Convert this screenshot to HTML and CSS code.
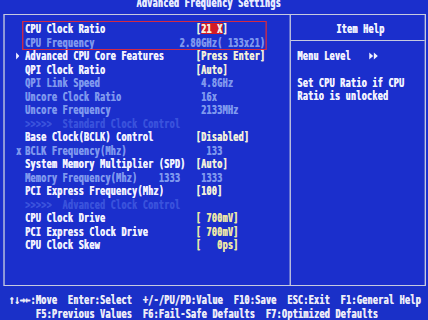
FILE: index.html
```html
<!DOCTYPE html>
<html>
<head>
<meta charset="utf-8">
<link rel="stylesheet" href="styles.css">
</head>
<body>
<div class="screen">
  <div class="title">Advanced Frequency Settings</div>
  <div class="main">
    <div class="left">
      <div class="group">
        <div class="row"><span class="mk"></span><span class="lbl">CPU Clock Ratio</span><span class="val">[<span class="hl">21 X</span>]</span></div>
        <div class="row dim"><span class="mk"></span><span class="lbl">CPU Frequency</span><span class="val shift">2.80GHz( 133x21)</span></div>
      </div>
      <div class="row"><span class="mk"><svg class="tri" width="5" height="8" viewBox="0 0 5 8"><path d="M0 0.5L5 4L0 7.5Z" fill="#f2f2ff"/></svg></span><span class="lbl">Advanced CPU Core Features</span><span class="val">[Press Enter]</span></div>
      <div class="row"><span class="mk"></span><span class="lbl">QPI Clock Ratio</span><span class="val">[Auto]</span></div>
      <div class="row dim"><span class="mk"></span><span class="lbl">QPI Link Speed</span><span class="val"> 4.8GHz</span></div>
      <div class="row dim"><span class="mk"></span><span class="lbl">Uncore Clock Ratio</span><span class="val"> 16x</span></div>
      <div class="row dim"><span class="mk"></span><span class="lbl">Uncore Frequency</span><span class="val"> 2133MHz</span></div>
      <div class="row off"><span class="mk"></span><span class="lbl">&gt;&gt;&gt;&gt;&gt;  Standard Clock Control</span><span class="val"></span></div>
      <div class="row"><span class="mk"></span><span class="lbl">Base Clock(BCLK) Control</span><span class="val">[Disabled]</span></div>
      <div class="row dim"><span class="mk">x</span><span class="lbl">BCLK Frequency(Mhz)</span><span class="val">  133</span></div>
      <div class="row"><span class="mk"></span><span class="lbl">System Memory Multiplier (SPD)</span><span class="val">[Auto]</span></div>
      <div class="row dim"><span class="mk"></span><span class="lbl">Memory Frequency(Mhz)    1333</span><span class="val"> 1333</span></div>
      <div class="row"><span class="mk"></span><span class="lbl">PCI Express Frequency(Mhz)</span><span class="val">[100]</span></div>
      <div class="row off"><span class="mk"></span><span class="lbl">&gt;&gt;&gt;&gt;&gt;  Advanced Clock Control</span><span class="val"></span></div>
      <div class="row"><span class="mk"></span><span class="lbl">CPU Clock Drive</span><span class="val mv">[ 700mV]</span></div>
      <div class="row"><span class="mk"></span><span class="lbl">PCI Express Clock Drive</span><span class="val mv">[ 700mV]</span></div>
      <div class="row"><span class="mk"></span><span class="lbl">CPU Clock Skew</span><span class="val mv">[   0ps]</span></div>
    </div>
    <div class="help">
      <div class="help-head">Item Help</div>
      <div class="help-body">
        <div class="hline">Menu Level   <svg class="arrows" width="14" height="8" viewBox="0 0 14 8"><path d="M0 0.5L6 4L0 7.5Z M7 0.5L13 4L7 7.5Z" fill="#f2f2ff"/></svg></div>
        <div class="hline"></div>
        <div class="hline">Set CPU Ratio if CPU</div>
        <div class="hline">Ratio is unlocked</div>
      </div>
    </div>
  </div>
  <div class="footer">
    <div class="fline">↑↓→←:Move  Enter:Select  +/-/PU/PD:Value  F10:Save  ESC:Exit  F1:General Help</div>
    <div class="fline second">F5:Previous Values  F6:Fail-Safe Defaults  F7:Optimized Defaults</div>
  </div>
</div>
</body>
</html>
```
FILE: styles.css
```css
html, body {
  margin: 0;
  padding: 0;
  width: 428px;
  height: 320px;
  overflow: hidden;
  background: #1b2fcc;
}

.screen {
  width: 640px;
  height: 320px;
  transform: scaleX(0.66875);
  transform-origin: 0 0;
  font-family: "DejaVu Sans Mono", "Liberation Mono", monospace;
  font-weight: bold;
  font-size: 12.6px;
  line-height: 13.5px;
  letter-spacing: 0.415px;
  color: #f2f2ff;
  background: #1b2fcc;
  display: flex;
  flex-direction: column;
  overflow: hidden;
  text-shadow: 0.6px 0 0 currentColor;
}

.title,
.lbl,
.val,
.hline,
.fline,
.help-head {
  white-space: pre;
}

.title {
  margin-top: -4.3px;
  height: 18.3px;
  padding-left: 204px;
  color: #e8ecff;
  flex: none;
}

.main {
  flex: none;
  display: flex;
  height: 271.75px;
  box-sizing: border-box;
  margin: 0 3.5px 0 5px;
  border-top: 1.5px solid #c6cadf;
  border-bottom: 1.5px solid #c6cadf;
  border-left: 2px solid #c6cadf;
  border-right: 2px solid #c6cadf;
}

.left {
  width: 425.6px;
  flex: none;
  box-sizing: border-box;
  padding: 7.1px 0 0 16px;
}

.group {
  position: relative;
}

.group::after {
  content: "";
  position: absolute;
  left: 9.9px;
  top: -1.6px;
  width: 366.4px;
  height: 29px;
  box-sizing: border-box;
  border-top: 1.4px solid #d42a44;
  border-bottom: 1.4px solid #d42a44;
  border-left: 2px solid #d42a44;
  border-right: 2px solid #d42a44;
}

.row {
  display: grid;
  grid-template-columns: 14.4px 255.2px auto;
  height: 13.5px;
}

.mk {
  display: flex;
  align-items: center;
  padding-left: 1px;
}

.tri {
  display: block;
  margin-top: 0.5px;
}

.val {
  color: #f2f0dc;
}

.val.mv {
  color: #ece6a8;
}

.shift {
  margin-left: -24px;
}

.hl {
  display: inline-block;
  height: 11px;
  line-height: 11px;
  background: #d41c26;
  color: #f6f0e0;
}

.dim .lbl,
.dim .val,
.dim .mk {
  color: #7f98ee;
}

.off .lbl {
  color: #3a52dc;
}

.help {
  flex: 1;
  border-left: 2px solid #c6cadf;
}

.help-head {
  padding: 7.1px 0 4.9px 8.6px;
  height: 13.5px;
  text-align: center;
  border-bottom: 1.5px solid #c6cadf;
}

.help-body {
  padding: 7.2px 0 0 10px;
}

.hline {
  height: 13.5px;
}

.arrows {
  margin-left: 3px;
  vertical-align: -0.5px;
}

.footer {
  flex: none;
  padding-top: 7.25px;
  color: #ececf8;
  background: #1a30c8;
}

.fline {
  height: 13.5px;
  padding-left: 13.5px;
}

.fline.second {
  padding-left: 53.5px;
}
```
